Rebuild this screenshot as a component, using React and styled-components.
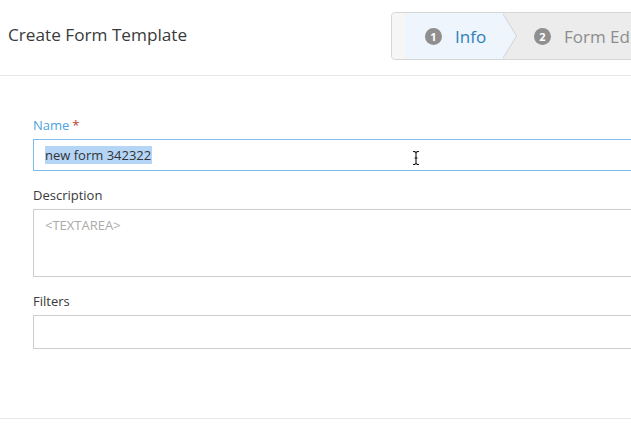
import React from "react";
import styled, { createGlobalStyle } from "styled-components";

const GlobalStyle = createGlobalStyle`
  html, body {
    margin: 0;
    padding: 0;
    background: #fff;
    overflow: hidden;
  }
  body {
    font-family: "Open Sans", "Liberation Sans", sans-serif;
    color: #333;
  }
  ::selection {
    background: #b5d5f7;
  }
`;

const Page = styled.div`
  width: 631px;
  height: 443px;
  overflow: hidden;
  position: relative;
`;

const Header = styled.div`
  display: flex;
  align-items: flex-start;
  justify-content: space-between;
  height: 75px;
  border-bottom: 1px solid #e6e6e6;
`;

const Title = styled.h1`
  margin: 0;
  padding: 23px 0 0 8px;
  font-size: 17.2px;
  font-weight: 400;
  color: #3a3a3a;
  line-height: 24px;
  white-space: nowrap;
`;

const Wizard = styled.div`
  display: flex;
  flex-shrink: 0;
  margin-top: 12px;
  margin-right: -122px;
  height: 46px;
  width: 360px;
  border: 1px solid #d6d6d6;
  border-radius: 4px;
  background: #ececec;
  overflow: hidden;
`;

const Stub = styled.div`
  width: 13px;
  background: #f6f6f6;
`;

const Step = styled.div`
  position: relative;
  display: flex;
  align-items: center;
  gap: 13px;
  padding-left: ${(p) => (p.$active ? "20px" : "31px")};
  width: ${(p) => (p.$active ? "78px" : "auto")};
  background: ${(p) => (p.$active ? "#eef5fc" : "transparent")};
  font-size: 17px;
  color: ${(p) => (p.$active ? "#2d7fb8" : "#8c8c8c")};
  white-space: nowrap;

  ${(p) =>
    p.$active &&
    `
    &::before, &::after {
      content: "";
      position: absolute;
      top: 0;
      width: 0;
      height: 0;
      border-top: 23px solid transparent;
      border-bottom: 23px solid transparent;
    }
    &::before {
      left: 100%;
      border-left: 14px solid #d3d3d3;
    }
    &::after {
      left: calc(100% - 1px);
      border-left: 14px solid #eef5fc;
    }
  `}
`;

const Badge = styled.span`
  display: inline-flex;
  align-items: center;
  justify-content: center;
  flex-shrink: 0;
  width: 17px;
  height: 17px;
  border-radius: 50%;
  background: #8f8f8f;
  color: #fff;
  font-size: 11px;
  font-weight: 700;
  line-height: 1;
`;

const Form = styled.div`
  padding: 40px 0 0 33px;
  height: 302px;
  border-bottom: 1px solid #e6e6e6;
`;

const Field = styled.div`
  margin-bottom: 15px;
`;

const Label = styled.div`
  font-size: 13px;
  line-height: 18px;
  margin-bottom: 5px;
  color: ${(p) => (p.$focus ? "#4aa3df" : "#3a3a3a")};
`;

const Required = styled.span`
  color: #c0392b;
  margin-left: 3px;
`;

const Box = styled.div`
  box-sizing: border-box;
  width: 640px;
  height: ${(p) => p.$h}px;
  border: 1px solid ${(p) => (p.$focus ? "#7dbde9" : "#cdcdcd")};
  padding: ${(p) => (p.$area ? "6px 11px" : "6px 11px")};
  font-size: 13px;
  line-height: 18px;
  color: #333;
`;

const Selected = styled.span`
  background: #b5d5f7;
  padding: 0 1px 0 0;
`;

const Placeholder = styled.span`
  color: #aaa;
  font-size: 13px;
`;

const Cursor = styled.svg`
  position: absolute;
  left: 411px;
  top: 150px;
`;

export default function App() {
  return (
    <Page>
      <GlobalStyle />
      <Header>
        <Title>Create Form Template</Title>
        <Wizard>
          <Stub />
          <Step $active>
            <Badge>1</Badge>
            Info
          </Step>
          <Step>
            <Badge>2</Badge>
            Form Editor
          </Step>
        </Wizard>
      </Header>
      <Form>
        <Field>
          <Label $focus>
            Name<Required>*</Required>
          </Label>
          <Box $h={32} $focus>
            <Selected>new form 342322</Selected>
          </Box>
        </Field>
        <Field>
          <Label>Description</Label>
          <Box $h={68} $area>
            <Placeholder>&lt;TEXTAREA&gt;</Placeholder>
          </Box>
        </Field>
        <Field>
          <Label>Filters</Label>
          <Box $h={34} />
        </Field>
      </Form>
      <Cursor width="10" height="16" viewBox="0 0 10 16">
        <path
          d="M2 1.5h1.5L5 2.5l1.5-1H8M5 2.5v11M2 14.5h1.5L5 13.5l1.5 1H8M3.5 8h3"
          fill="none"
          stroke="#111"
          strokeWidth="1.1"
        />
      </Cursor>
    </Page>
  );
}
